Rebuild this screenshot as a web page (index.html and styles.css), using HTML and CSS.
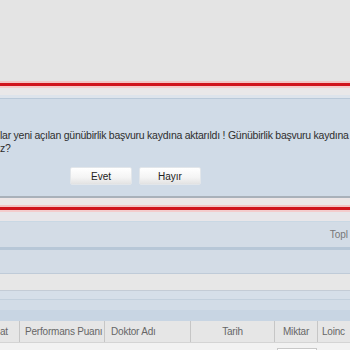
FILE: index.html
```html
<!DOCTYPE html>
<html>
<head>
<meta charset="utf-8">
<link rel="stylesheet" href="styles.css">
</head>
<body>
<div class="page">
  <div class="top"></div>
  <div class="redline"></div>
  <div class="dlg-head"></div>
  <div class="dlg">
    <div class="msg">
      <div class="line">lar yeni açılan günübirlik başvuru kaydına aktarıldı ! Günübirlik başvuru kaydına</div>
      <div class="line">z?</div>
    </div>
    <div class="btns">
      <button class="btn">Evet</button>
      <button class="btn">Hayır</button>
    </div>
  </div>
  <div class="gap"></div>
  <div class="redline"></div>
  <div class="gap2"></div>
  <div class="band toolbar"><span class="topl">Topl</span></div>
  <div class="band band2"></div>
  <div class="light"></div>
  <div class="band3"></div>
  <div class="band4"></div>
  <div class="band5"></div>
  <div class="header">
    <div class="col c1">at</div>
    <div class="col c2">Performans Puanı</div>
    <div class="col c3">Doktor Adı</div>
    <div class="col c4">Tarih</div>
    <div class="col c5">Miktar</div>
    <div class="col c6">Loinc</div>
  </div>
  <div class="row">
    <div class="spin"><span class="spin-arrow"></span></div>
  </div>
</div>
</body>
</html>
```
FILE: styles.css
```css
html, body {
  margin: 0;
  padding: 0;
  width: 350px;
  height: 350px;
  overflow: hidden;
  background: #e4e4e4;
}
.page {
  display: flex;
  flex-direction: column;
  width: 350px;
  font-family: "Liberation Sans", Arial, sans-serif;
  font-size: 10px;
  color: #333;
}
.top {
  height: 81px;
  background: #e4e4e4;
}
.redline {
  height: 3px;
  background: #d0141c;
  border-top: 2px solid #f2c4c4;
  border-bottom: 2px solid #f4cccc;
}
.dlg-head {
  height: 7px;
  background: #e9e8e9;
  border-bottom: 3px solid #dde4ec;
}
.dlg {
  height: 97px;
  background: #d0dbe7;
  border-top: 1px solid #b9c9d9;
  border-bottom: 2px solid #a9b1ba;
  display: flex;
  flex-direction: column;
}
.msg {
  padding-top: 30px;
  line-height: 13px;
  font-size: 10.5px;
  letter-spacing: -0.25px;
  color: #2e2e2e;
}
.line {
  white-space: nowrap;
  overflow: hidden;
}
.btns {
  display: flex;
  gap: 7px;
  padding-left: 70px;
  margin-top: 12px;
}
.btn {
  width: 62px;
  height: 18px;
  padding: 0;
  font: inherit;
  font-size: 10px;
  color: #222;
  border: 1px solid #e2e6ea;
  border-radius: 2px;
  background: linear-gradient(#ffffff, #f4f4f4 60%, #e2e2e2);
}
.gap {
  height: 7px;
  background: #ece6e7;
}
.gap2 {
  height: 9px;
  background: #e8e6e9;
  border-bottom: 1px solid #c9d8e4;
}
.band {
  background: #d3dce6;
}
.toolbar {
  height: 25px;
  border-bottom: 3px solid #b7c7d7;
  display: flex;
  justify-content: flex-end;
  align-items: center;
}
.topl {
  color: #777;
  font-size: 10px;
  white-space: nowrap;
  padding-right: 2px;
}
.band2 {
  height: 23px;
  border-bottom: 1px solid #bfcbd8;
}
.light {
  height: 16px;
  background: #e7e7e7;
  border-bottom: 1px solid #c4ccd6;
}
.band3 {
  height: 8px;
  background: #d6dfe9;
  border-bottom: 1px solid #c3d0dd;
}
.band4 {
  height: 10px;
  background: #d2dce7;
}
.band5 {
  height: 11px;
  background: #c8d5e3;
}
.header {
  height: 21px;
  display: flex;
  background: #e6e6e6;
  border-bottom: 1px solid #d4d4d4;
  color: #666;
  align-items: stretch;
  letter-spacing: -0.2px;
}
.col {
  border-right: 1px solid #c6c6c6;
  display: flex;
  align-items: center;
  white-space: nowrap;
  flex: none;
  box-sizing: border-box;
}
.c1 { width: 20px; }
.c2 { width: 85px; padding-left: 5px; }
.c3 { width: 86px; padding-left: 6px; }
.c4 { width: 84px; justify-content: center; }
.c5 { width: 43px; justify-content: center; }
.c6 { width: 32px; padding-left: 4px; border-right: none; }
.row {
  height: 10px;
  background: #f2f2f2;
  position: relative;
}
.spin {
  position: absolute;
  left: 277px;
  top: 5px;
  width: 40px;
  height: 12px;
  background: #fff;
  border: 1px solid #c8c8c8;
  box-sizing: border-box;
}
.spin-arrow {
  position: absolute;
  right: 4px;
  top: 2px;
  width: 0;
  height: 0;
  border-left: 3px solid transparent;
  border-right: 3px solid transparent;
  border-bottom: 3px solid #555;
}
```
